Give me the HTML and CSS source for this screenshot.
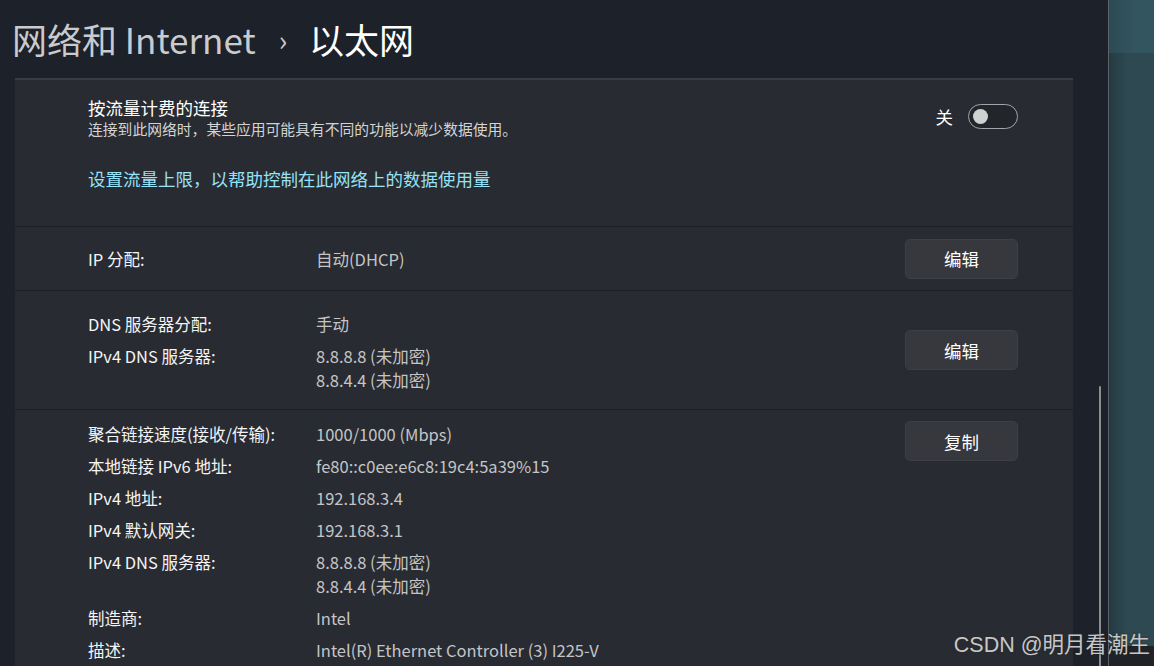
FILE: index.html
```html
<!DOCTYPE html>
<html lang="zh-CN">
<head>
    <meta charset="UTF-8">
    <meta name="viewport" content="width=device-width, initial-scale=1.0">
    <link rel="stylesheet" href="styles.css">
    <title>以太网</title>
</head>
<body>
    <div class="window">
        <div class="settings">
            <h1 class="page-title">
                <span class="crumb">网络和 Internet</span>
                <span class="sep">›</span>
                <span class="current">以太网</span>
            </h1>

            <div class="content">
                <div class="card">
                    <section class="metered">
                        <div class="metered-row">
                            <div class="metered-text">
                                <div class="metered-title">按流量计费的连接</div>
                                <div class="metered-desc">连接到此网络时，某些应用可能具有不同的功能以减少数据使用。</div>
                            </div>
                            <div class="toggle-wrap">
                                <span class="toggle-label">关</span>
                                <span class="toggle"><span class="knob"></span></span>
                            </div>
                        </div>
                        <a class="link" href="#">设置流量上限，以帮助控制在此网络上的数据使用量</a>
                    </section>

                    <section class="block block-center">
                        <div class="info">
                            <span class="label">IP 分配:</span>
                            <span class="value">自动(DHCP)</span>
                        </div>
                        <button class="btn">编辑</button>
                    </section>

                    <section class="block block-dns block-center">
                        <div class="info">
                            <span class="label">DNS 服务器分配:</span>
                            <span class="value">手动</span>
                            <span class="label">IPv4 DNS 服务器:</span>
                            <span class="value">8.8.8.8 (未加密)<br>8.8.4.4 (未加密)</span>
                        </div>
                        <button class="btn">编辑</button>
                    </section>

                    <section class="block block-props">
                        <div class="info">
                            <span class="label">聚合链接速度(接收/传输):</span>
                            <span class="value">1000/1000 (Mbps)</span>
                            <span class="label">本地链接 IPv6 地址:</span>
                            <span class="value">fe80::c0ee:e6c8:19c4:5a39%15</span>
                            <span class="label">IPv4 地址:</span>
                            <span class="value">192.168.3.4</span>
                            <span class="label">IPv4 默认网关:</span>
                            <span class="value">192.168.3.1</span>
                            <span class="label">IPv4 DNS 服务器:</span>
                            <span class="value">8.8.8.8 (未加密)<br>8.8.4.4 (未加密)</span>
                            <span class="label">制造商:</span>
                            <span class="value">Intel</span>
                            <span class="label">描述:</span>
                            <span class="value">Intel(R) Ethernet Controller (3) I225-V</span>
                        </div>
                        <button class="btn btn-top">复制</button>
                    </section>
                </div>

                <div class="gutter">
                    <div class="scroll-thumb"></div>
                </div>
            </div>
        </div>

        <div class="desktop">
            <div class="desk-top"></div>
            <div class="desk-mid"></div>
            <div class="desk-bottom"></div>
        </div>

        <div class="watermark">CSDN @明月看潮生</div>
    </div>
</body>
</html>
```

FILE: styles.css
```css
html, body {
    margin: 0;
    padding: 0;
    height: 100%;
    overflow: hidden;
}

body {
    font-family: 'Segoe UI', 'Noto Sans CJK SC', sans-serif;
    background-color: #1d2129;
    color: #ffffff;
}

.window {
    position: relative;
    display: flex;
    height: 666px;
}

.settings {
    width: 1108px;
    display: flex;
    flex-direction: column;
}

/* titre */
.page-title {
    margin: 0;
    height: 78px;
    box-sizing: border-box;
    padding: 0 0 0 12px;
    font-size: 35px;
    font-weight: normal;
    line-height: 48px;
    display: flex;
    align-items: center;
    white-space: nowrap;
}

.crumb {
    color: #c9cbce;
}

.sep {
    color: #c9cbce;
    font-size: 28px;
    margin: 0 22px 0 23px;
}

.current {
    color: #ffffff;
}

.content {
    flex: 1;
    display: flex;
    min-height: 0;
}

.card {
    margin-left: 15px;
    width: 1058px;
    background-color: #282b31;
    border-top: 2px solid #383c43;
}

.gutter {
    flex: 1;
    position: relative;
}

.scroll-thumb {
    margin: 308px 0 0 26px;
    width: 2px;
    height: 300px;
    border-radius: 1px;
    background-color: #8c8d8f;
}

/* sections */
section {
    border-bottom: 1px solid #1d2025;
}

.metered {
    padding: 17px 55px 35px 73px;
    height: 147px;
    box-sizing: border-box;
}

.metered-row {
    display: flex;
    align-items: center;
}

.metered-text {
    flex: 1;
}

.metered-title {
    font-size: 17.5px;
    line-height: 22px;
    color: #ffffff;
}

.metered-desc {
    font-size: 14.8px;
    line-height: 20px;
    color: #d2d3d5;
}

.toggle-wrap {
    display: flex;
    align-items: center;
    margin-top: -3px;
}

.toggle-label {
    font-size: 17.5px;
    margin-right: 15px;
}

.toggle {
    width: 48px;
    height: 23px;
    border: 1px solid #a2a4a7;
    border-radius: 13px;
    background-color: #22252a;
    display: flex;
    align-items: center;
}

.knob {
    width: 15px;
    height: 15px;
    border-radius: 50%;
    background-color: #d0d1d3;
    margin-left: 4px;
}

.link {
    display: block;
    margin-top: 28px;
    font-size: 17.5px;
    line-height: 24px;
    color: #96e2f7;
    text-decoration: none;
}

.block {
    display: flex;
    padding: 0 55px 0 73px;
}

.block-center {
    align-items: center;
    height: 64px;
    box-sizing: border-box;
}

.block-dns {
    height: 119px;
}

.block-dns .info {
    margin-top: 3px;
}

.block-props {
    align-items: flex-start;
    padding-top: 12px;
    border-bottom: none;
}

.info {
    flex: 1;
    display: grid;
    grid-template-columns: 228px auto;
    row-gap: 8px;
    font-family: 'Noto Sans CJK SC', sans-serif;
    font-size: 16.5px;
    line-height: 24px;
}

.label {
    color: #f4f4f5;
}

.value {
    color: #c4c5c7;
}

.btn {
    width: 113px;
    height: 40px;
    border: 1px solid #3c3f44;
    border-radius: 5px;
    background-color: #36383d;
    color: #ffffff;
    font-family: inherit;
    font-size: 17.5px;
    cursor: pointer;
}

.btn-top {
    margin-top: -1px;
}

/* bureau a droite */
.desktop {
    flex: 1;
    display: flex;
    flex-direction: column;
    border-left: 1px solid #5b6368;
}

.desk-top {
    height: 53px;
    background: linear-gradient(to right, #2c4a54, #35586300 60%), #33555f;
}

.desk-mid {
    flex: 1;
    background: linear-gradient(to right, #243a42, #2e4952 40%);
}

.desk-bottom {
    height: 20px;
    background-color: #1f2226;
}

.watermark {
    position: absolute;
    right: 4px;
    bottom: 8px;
    font-family: 'Liberation Sans', 'Noto Sans CJK SC', sans-serif;
    font-size: 21.5px;
    color: #c6c7c8;
    text-shadow: 0 0 2px #2a2a2a;
}
```
